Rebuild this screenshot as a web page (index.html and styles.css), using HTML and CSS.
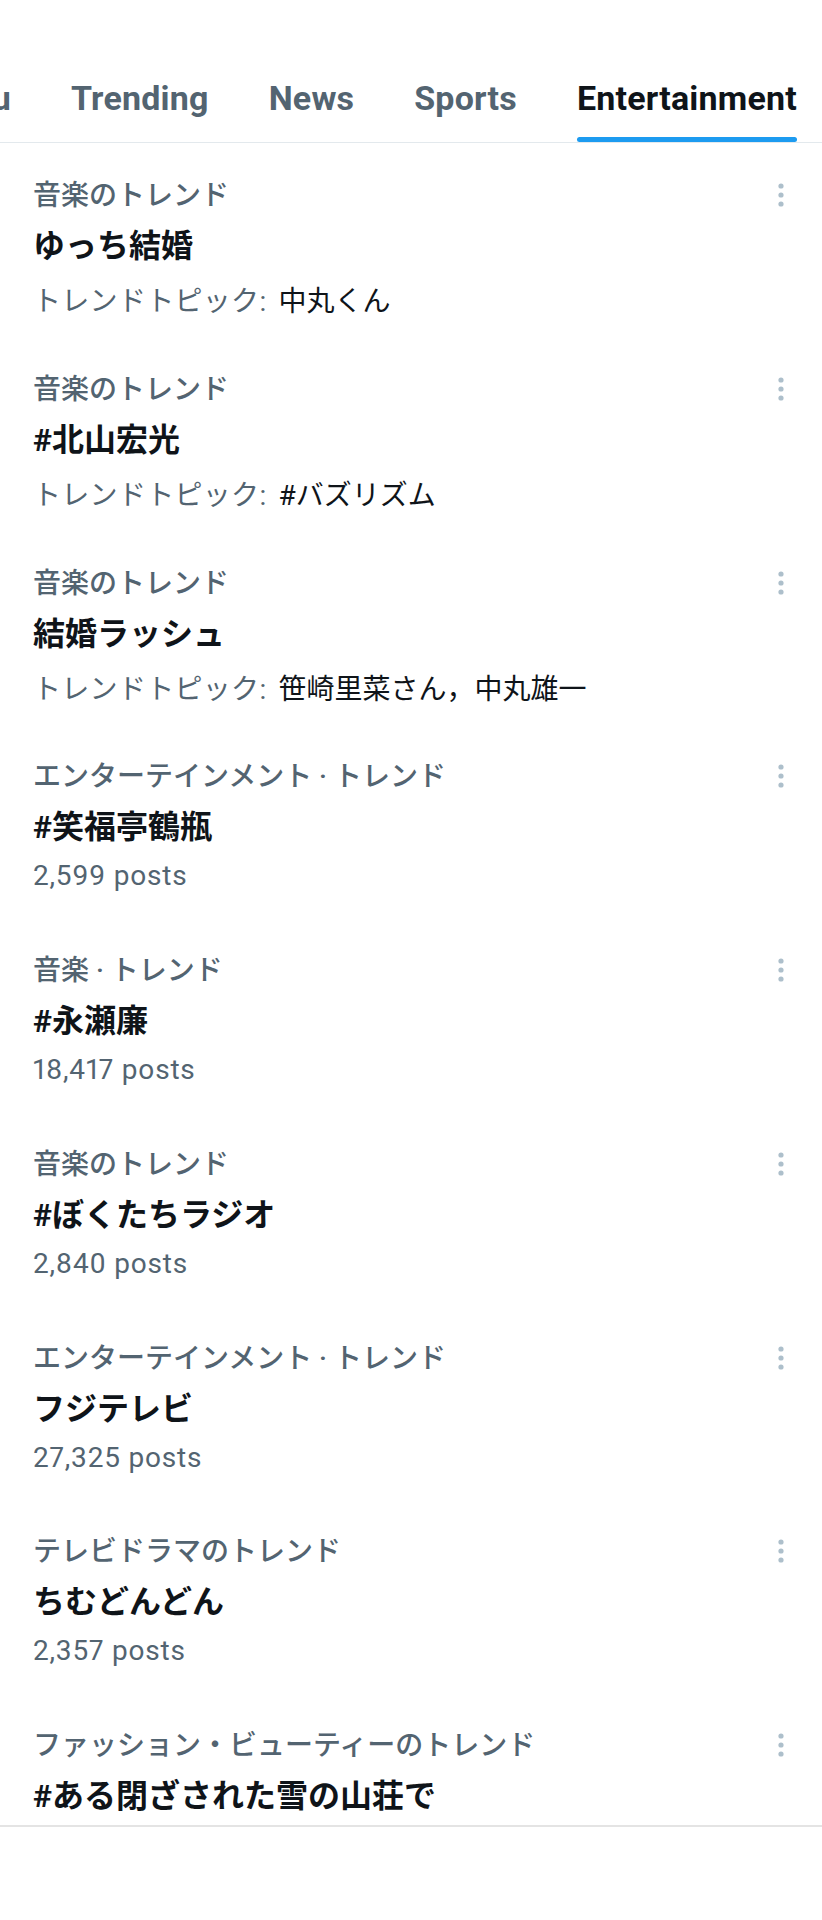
FILE: index.html
```html
<!DOCTYPE html>
<html lang="ja">
<head>
<meta charset="utf-8">
<title>Explore - Entertainment</title>
<link rel="stylesheet" href="styles.css">
</head>
<body>
<nav class="tabs">
  <div class="tab"><span class="tab-label">For you</span><span class="indicator"></span></div>
  <div class="tab"><span class="tab-label">Trending</span><span class="indicator"></span></div>
  <div class="tab"><span class="tab-label">News</span><span class="indicator"></span></div>
  <div class="tab"><span class="tab-label">Sports</span><span class="indicator"></span></div>
  <div class="tab tab--active"><span class="tab-label">Entertainment</span><span class="indicator"></span></div>
</nav>

<section class="trends">
  <div class="trend">
    <div class="trend-body">
      <div class="trend-cat">音楽のトレンド</div>
      <div class="trend-title">ゆっち結婚</div>
      <div class="trend-topic">トレンドトピック:<span class="topic-names">中丸くん</span></div>
    </div>
    <svg class="trend-more" viewBox="0 0 10 28"><circle cx="5" cy="5" r="2.6"/><circle cx="5" cy="14" r="2.6"/><circle cx="5" cy="23" r="2.6"/></svg>
  </div>
  <div class="trend">
    <div class="trend-body">
      <div class="trend-cat">音楽のトレンド</div>
      <div class="trend-title">#北山宏光</div>
      <div class="trend-topic">トレンドトピック:<span class="topic-names">#バズリズム</span></div>
    </div>
    <svg class="trend-more" viewBox="0 0 10 28"><circle cx="5" cy="5" r="2.6"/><circle cx="5" cy="14" r="2.6"/><circle cx="5" cy="23" r="2.6"/></svg>
  </div>
  <div class="trend">
    <div class="trend-body">
      <div class="trend-cat">音楽のトレンド</div>
      <div class="trend-title">結婚ラッシュ</div>
      <div class="trend-topic">トレンドトピック:<span class="topic-names">笹崎里菜さん，中丸雄一</span></div>
    </div>
    <svg class="trend-more" viewBox="0 0 10 28"><circle cx="5" cy="5" r="2.6"/><circle cx="5" cy="14" r="2.6"/><circle cx="5" cy="23" r="2.6"/></svg>
  </div>
  <div class="trend">
    <div class="trend-body">
      <div class="trend-cat">エンターテインメント · トレンド</div>
      <div class="trend-title">#笑福亭鶴瓶</div>
      <div class="trend-posts">2,599 posts</div>
    </div>
    <svg class="trend-more" viewBox="0 0 10 28"><circle cx="5" cy="5" r="2.6"/><circle cx="5" cy="14" r="2.6"/><circle cx="5" cy="23" r="2.6"/></svg>
  </div>
  <div class="trend">
    <div class="trend-body">
      <div class="trend-cat">音楽 · トレンド</div>
      <div class="trend-title">#永瀬廉</div>
      <div class="trend-posts">18,417 posts</div>
    </div>
    <svg class="trend-more" viewBox="0 0 10 28"><circle cx="5" cy="5" r="2.6"/><circle cx="5" cy="14" r="2.6"/><circle cx="5" cy="23" r="2.6"/></svg>
  </div>
  <div class="trend">
    <div class="trend-body">
      <div class="trend-cat">音楽のトレンド</div>
      <div class="trend-title">#ぼくたちラジオ</div>
      <div class="trend-posts">2,840 posts</div>
    </div>
    <svg class="trend-more" viewBox="0 0 10 28"><circle cx="5" cy="5" r="2.6"/><circle cx="5" cy="14" r="2.6"/><circle cx="5" cy="23" r="2.6"/></svg>
  </div>
  <div class="trend">
    <div class="trend-body">
      <div class="trend-cat">エンターテインメント · トレンド</div>
      <div class="trend-title">フジテレビ</div>
      <div class="trend-posts">27,325 posts</div>
    </div>
    <svg class="trend-more" viewBox="0 0 10 28"><circle cx="5" cy="5" r="2.6"/><circle cx="5" cy="14" r="2.6"/><circle cx="5" cy="23" r="2.6"/></svg>
  </div>
  <div class="trend">
    <div class="trend-body">
      <div class="trend-cat">テレビドラマのトレンド</div>
      <div class="trend-title">ちむどんどん</div>
      <div class="trend-posts">2,357 posts</div>
    </div>
    <svg class="trend-more" viewBox="0 0 10 28"><circle cx="5" cy="5" r="2.6"/><circle cx="5" cy="14" r="2.6"/><circle cx="5" cy="23" r="2.6"/></svg>
  </div>
  <div class="trend trend--last">
    <div class="trend-body">
      <div class="trend-cat">ファッション・ビューティーのトレンド</div>
      <div class="trend-title">#ある閉ざされた雪の山荘で</div>
    </div>
    <svg class="trend-more" viewBox="0 0 10 28"><circle cx="5" cy="5" r="2.6"/><circle cx="5" cy="14" r="2.6"/><circle cx="5" cy="23" r="2.6"/></svg>
  </div>
</section>
</body>
</html>
```

FILE: styles.css
```css
html, body {
  margin: 0;
  padding: 0;
  background: #ffffff;
}

body {
  font-family: Roboto, "Noto Sans CJK JP", sans-serif;
  color: #0f1419;
}

/* ---------- tab bar ---------- */
.tabs {
  display: flex;
  justify-content: flex-end;
  height: 143px;
  box-sizing: border-box;
  border-bottom: 1px solid #e3e9ed;
  overflow: hidden;
}

.tab {
  flex: none;
  display: flex;
  flex-direction: column;
  justify-content: flex-end;
  padding: 0 25px 0 35px;
}

.tab-label {
  font-size: 34px;
  font-weight: 700;
  line-height: 40px;
  letter-spacing: 0.2px;
  color: #536471;
  white-space: nowrap;
}

.indicator {
  height: 5px;
  margin-top: 19px;
  border-radius: 3px;
  background: transparent;
}

.tab--active .tab-label {
  color: #0f1419;
}

.tab--active .indicator {
  background: #1d9bf0;
}

/* ---------- trends ---------- */
.trends {
  border-bottom: 2px solid #e4e4e4;
}

.trend {
  display: flex;
  align-items: flex-start;
  height: 193.75px;
  box-sizing: border-box;
  padding: 35px 36px 0 33px;
}

.trend--last {
  height: 132px;
}

.trend-body {
  flex: 1;
  min-width: 0;
}

.trend-cat {
  font-size: 28px;
  font-weight: 500;
  line-height: 36px;
  color: #536471;
  white-space: nowrap;
}

.trend-title {
  margin-top: 10px;
  font-size: 32px;
  font-weight: 700;
  line-height: 44px;
  color: #0f1419;
  white-space: nowrap;
}

.trend-topic {
  margin-top: 16px;
  font-size: 28px;
  line-height: 36px;
  letter-spacing: 0.3px;
  color: #536471;
  white-space: nowrap;
}

.topic-names {
  margin-left: 12px;
  letter-spacing: 0;
  color: #0f1419;
}

.trend-posts {
  margin-top: 9px;
  font-size: 28px;
  line-height: 36px;
  letter-spacing: 0.8px;
  font-variant-numeric: proportional-nums;
  color: #536471;
}

.trend-more {
  flex: none;
  width: 10px;
  height: 28px;
  margin-top: 3px;
  fill: #adbfcb;
}
```
